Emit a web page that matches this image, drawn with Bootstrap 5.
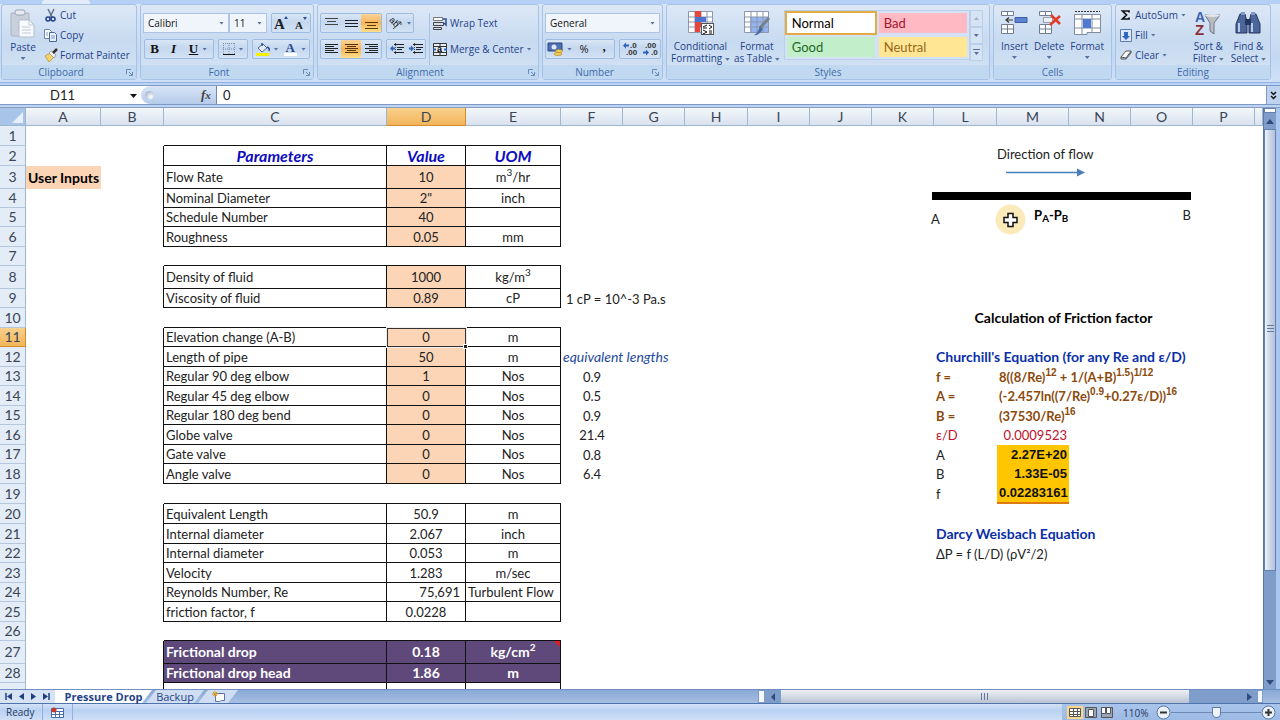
<!DOCTYPE html>
<html lang="en">
<head>
<meta charset="utf-8">
<meta name="viewport" content="width=device-width, initial-scale=1">
<title>Pressure Drop</title>
<link href="https://cdn.jsdelivr.net/npm/bootstrap@5.3.0/dist/css/bootstrap.min.css" rel="stylesheet">
<style>
:root{--ui:#1f4288;--ink:#222}
body{height:100vh;min-height:400px;overflow:hidden;background:#bcd3f3;font-family:"Open Sans","Noto Sans",sans-serif;font-size:10px;line-height:12px;color:var(--ui)}
button,select,input{font:inherit;color:inherit}
button{border:0;background:none;padding:0}
svg{display:block;flex:none;overflow:visible}
/* ribbon */
.tabstrip{height:4px;background:#b4d0f7}
.tabstrip div{width:48px;height:4px;margin-left:42px;background:#e3edf9;border-radius:3px 3px 0 0}
.ribbon{height:79px;padding:0 8px 2px 1px;background:linear-gradient(#d9e6f6,#c3d8f1 70%,#cfe0f6);border-bottom:1px solid #8db2e3;gap:3px}
.rgroup{border:1px solid #a6c2e6;border-radius:3px;background:linear-gradient(#dde8f5,#d2e1f4 25%,#c7daf0 50%,#d5e4f5);flex:none}
.rbody{flex:1;min-height:0;padding:5px 4px 0}
.rlabel{height:14px;line-height:14px;background:#c1d8f1;color:#3e6aaa;text-align:center;position:relative}
.rlabel svg{position:absolute;right:3px;top:4px}
.w-clip{width:136px}.w-font{width:174px}.w-align{width:222px}.w-num{width:121px}.w-style{width:324px}.w-cells{width:119px}.w-edit{width:156px}
.big{display:flex;flex-direction:column;align-items:center;line-height:12px;white-space:nowrap}
.lrow{display:flex;align-items:center;gap:3px;height:20px;white-space:nowrap}
.cluster{display:flex;align-items:center;height:20px;border:1px solid #9ebbe2;border-radius:2px;background:linear-gradient(#d9e6f6,#c5d8ef 45%,#d3e2f4)}
.cluster button{height:18px;width:20px;display:flex;align-items:center;justify-content:center;gap:4px}
.cluster .wide{width:30px}
.cluster .on{background:linear-gradient(#fbd39a,#f7b457 50%,#ffe08a)}
.serif{font:700 13px "Liberation Serif",serif;color:#111}
.caret{width:5px;height:3px;display:inline-block;background:#56749f;clip-path:polygon(0 0,100% 0,50% 100%);vertical-align:middle;flex:none}
.pick{position:relative;display:flex;align-items:center}
.pick select{appearance:none;width:100%;height:20px;border:1px solid #abc4e4;border-radius:0;background:#f0f5fc;padding:0 4px;color:#111;outline:0}
.pick .caret{position:absolute;right:5px}
.gallery{border:1px solid #b9cfea;background:#d3e2f4;width:186px;flex:none}
.gallery button{width:88px;height:20px;margin:2px;text-align:left;padding-left:5px;font:13px/20px Lato,sans-serif}
.gallery .sel{outline:2px solid #e3ab44;background:#fff;color:#000}
.gscroll{width:13px}
.gscroll button{flex:1;display:flex;align-items:center;justify-content:center;border:1px solid #b9cfea;background:#d5e3f5}
/* formula bar */
.fbar{height:20px;margin-top:2px;background:#fff;border-top:1px solid #7d99c4;border-bottom:1px solid #7d99c4;color:#222;font:13px/18px Lato,sans-serif}
.fbar input{border:0;outline:0;background:none;padding:0}
.namebox{width:141px;position:relative}
.namebox input{width:125px;text-align:center}
.namebox .caret{background:#111;width:7px;height:4px;position:absolute;right:4px;top:8px}
.fx{width:76px;border-radius:10px 0 0 10px;background:linear-gradient(#d9e5f7,#b5cbea);border-right:1px solid #7188ae;padding:0 5px 0 4px}
.fx .knob{width:9px;height:9px;border-radius:50%;background:radial-gradient(circle at 65% 65%,#fff,#aebcd3 70%)}
.fx i{font:italic 700 13px "Liberation Serif",serif;color:#444}
.expand{width:14px;background:#bdd3f0;border-left:1px solid #7d99c4}
/* sheet */
.work{flex:1;min-height:0;margin-top:2px;border-top:1px solid #8a9fc0}
.sheet{flex:1;min-width:0;overflow:hidden;position:relative;background:#fff}
.grid{table-layout:fixed;width:100%;border-collapse:separate;border-spacing:0;font:13px/18px Lato,sans-serif;color:var(--ink)}
.grid td,.grid th{padding:0 2px;height:20px;white-space:nowrap;vertical-align:middle;font-weight:400}
.grid .s td,.grid .s th{height:19px}
.grid .t td,.grid .t th{height:23px}
.grid thead th{height:18px!important;font-size:14px;line-height:17px;text-align:center;background:linear-gradient(#f4f7fb,#d9e2ee);border-right:1px solid #9eb6ce;border-bottom:1px solid #9eb6ce;padding:0;color:#3a4656}
.grid tbody th{font-size:14px;text-align:center;background:#e4ecf7;border-right:1px solid #9eb6ce;border-bottom:1px solid #b5c7dd;padding:0;color:#3a4656}
.grid thead .hot,.grid tbody .hot{background:linear-gradient(#f9d08d,#f2b55a);border-color:#d18b2c}
.corner{background:#a9c4e9!important;position:relative}
.corner svg{position:absolute;right:2px;bottom:2px}
.grid .be{border-right:1px solid #111}
.grid .bb{border-bottom:1px solid #111}
.grid .k{border-right:1px solid #111;border-bottom:1px solid #111}
.grid .c{text-align:center}
.grid .in{background:#fbd5b5}
.grid .hd td.k{color:#0b0bc0;font-size:16px;font-weight:700;font-style:italic;text-align:center}
.grid .pur td.k{background:#5f497a;color:#fff;font-size:14px;font-weight:700}
.grid .strong{font-size:14px;font-weight:700;color:#000}
.grid .eq{font-size:14px;font-style:italic;color:#1f4a9c}
.grid .rd{color:#c0102c}
.note{position:relative}
.note::after{content:"";position:absolute;right:0;top:0;border:3px solid;border-color:#e01b24 #e01b24 transparent transparent}
.active{position:relative}
.active::after{content:"";position:absolute;inset:0 -1px -1px 0;border:1px solid #333;outline:1px solid #eee;pointer-events:none}
.active i{position:absolute;right:-3px;bottom:-3px;width:5px;height:5px;background:#222;border:1px solid #fff;z-index:2}
.grid sup{font-size:10px;line-height:0;top:-6px;vertical-align:baseline}
.grid .bl{color:#0a2fa8;font-size:14px;font-weight:700}
.grid .br{color:#8b4a0b;font-weight:700}
.grid .br sup{font:700 10px/0 "Liberation Sans",sans-serif}
.grid .y{background:#ffc600;color:#111;font:700 13px/18px "Liberation Sans",sans-serif;text-align:right}
.grid .yl{border-bottom:2px solid #dd7a10}
/* drawing shapes floating over the sheet */
.fig{position:absolute;left:931px;top:37px;width:260px;color:var(--ink);font:13px/18px Lato,sans-serif}
.fig .pipe{height:8px;background:#000;margin:15px 0 8px 1px}
.fig .title{padding-left:66px}
.fig .arrow{margin:5px 0 0 75px}
.fig b{padding-right:20px;color:#000}
.pointer{position:absolute;left:995px;top:96px}
/* scroll bars */
.vbar{width:13px;background:#7f9dcb;border-left:1px solid #5b79aa}
.vbar .thumb{flex:1;padding-bottom:42px;border:1px solid #6681ad;background:linear-gradient(90deg,#eef3fa,#cdd8e8 45%,#b4c4dc)}
.vbar button,.hbar button{display:flex;align-items:center;justify-content:center}
.hbar{background:#7f9dcb;width:505px;margin-right:17px}
.hbar .thumb{flex:1;background:linear-gradient(#eef1f6,#b9c3d4)}
.tabs{height:15px;background:linear-gradient(#89a9d6,#a6bfe3);border-top:1px solid #6f8fbf;border-bottom:1px solid #4f73ab;line-height:13px;font-size:11px}
.nav4{width:56px;background:#d6e3f5;border-right:1px solid #8aa6d0;padding:0 5px}
.stab{height:13px;position:relative;z-index:0;display:flex;align-items:center;justify-content:center;width:58px;margin-right:-6px}
.stab::before{content:"";position:absolute;inset:0;z-index:-1;background:#cfdef2;clip-path:polygon(10px 0,100% 0,calc(100% - 10px) 100%,0 100%)}
.stab.cur{width:97px;font-weight:700;margin-left:-1px}
.stab.cur::before{background:#fff;clip-path:polygon(0 0,100% 0,calc(100% - 10px) 100%,0 100%)}
.stab.new{width:40px}
.status{height:16px;background:linear-gradient(#d3e3f8,#b9d1f2 40%,#cfe0f7);font-size:10px;color:#26395e}
.status .sep{border-right:1px solid #94b0da;height:16px;line-height:17px}
.zoom{background:linear-gradient(#a9c5ec,#9dbae5);padding:1px 4px 0 5px;width:218px}
.zoom input{appearance:none;width:90px;height:14px;background:linear-gradient(#6e88b4,#6e88b4) center/100% 1px no-repeat;margin:0}
.zoom input::-webkit-slider-thumb{appearance:none;width:9px;height:11px;background:#eef3fb;border:1px solid #5e78a4;border-radius:1px 1px 5px 5px}
</style>
</head>
<body class="d-flex flex-column">
<header>
<div class="tabstrip"><div></div></div>
<div class="ribbon d-flex">
  <section class="rgroup w-clip d-flex flex-column">
    <div class="rbody d-flex gap-2 pt-0">
      <button class="big pt-1 ps-1"><svg width="26" height="32" viewBox="0 0 26 32"><rect x="1" y="4" width="18" height="23" rx="1" fill="#c9d0db" stroke="#aab3c2"/><rect x="5" y="1" width="10" height="5" rx="2" fill="#e8ebf0" stroke="#9aa5b6"/><path d="M9 11h10l5 5v12H9z" fill="#f8fafd" stroke="#b3bdcc"/><path d="M19 11v5h5M12 18h8M12 21h9M12 24h9" fill="none" stroke="#c3cbd8"/></svg><span>Paste</span><span class="caret mt-1"></span></button>
      <div>
        <button class="lrow"><svg width="13" height="13" viewBox="0 0 13 13"><path d="M4 0l4 8M10 0L6 8" stroke="#5f6f88" stroke-width="1.5"/><circle cx="4" cy="10" r="2" fill="none" stroke="#1e3f8c" stroke-width="1.5"/><circle cx="9" cy="10" r="2" fill="none" stroke="#1e3f8c" stroke-width="1.5"/></svg>Cut</button>
        <button class="lrow"><svg width="13" height="13" viewBox="0 0 13 13"><path d="M.5.5h5l2 2v7h-7z" fill="#fff" stroke="#6b86b4"/><path d="M5.500 3.500h5l2 2v7h-7z" fill="#e9f0fb" stroke="#47679f"/><path d="M7 7h4M7 9h4M2 4h2M2 6h2" stroke="#7c98c9"/></svg>Copy</button>
        <button class="lrow"><svg width="13" height="13" viewBox="0 0 13 13"><path d="M1 7l5-3 4 4-5 5z" fill="#f6d366" stroke="#bb8d25" stroke-width=".7"/><path d="M5 4l2-2 5 4-2 3z" fill="#eef0f5" stroke="#777" stroke-width=".6"/><path d="M9 4l4-4" stroke="#333" stroke-width="2.500"/></svg>Format Painter</button>
      </div>
    </div>
    <div class="rlabel pe-3">Clipboard<svg width="7" height="7" viewBox="0 0 7 7"><path d="M.5 5V.5H5M3 3l3 3M6.500 3v3.500H3" fill="none" stroke="#6c8ab8"/></svg></div>
  </section>
  <section class="rgroup w-font d-flex flex-column">
    <div class="rbody pt-2 px-0 d-flex flex-column align-items-center" style="gap:6px">
      <div class="d-flex"><label class="pick" style="width:86px"><select aria-label="Font"><option>Calibri</option></select><span class="caret"></span></label><label class="pick" style="width:38px"><select aria-label="Font size"><option>11</option></select><span class="caret"></span></label>
        <div class="cluster ms-1"><button style="width:19px" aria-label="Grow font"><svg width="15" height="14" viewBox="0 0 15 14"><text x="0" y="13" font-family="Liberation Serif" font-size="15" font-weight="700" fill="#222">A</text><path d="M10 3l2-3 2 3z" fill="#2c4f96"/></svg></button><button style="width:19px" aria-label="Shrink font"><svg width="14" height="14" viewBox="0 0 14 14"><text x="1" y="13" font-family="Liberation Serif" font-size="11" font-weight="700" fill="#222">A</text><path d="M9 1h4l-2 3z" fill="#2c4f96"/></svg></button></div></div>
      <div class="d-flex gap-1">
        <div class="cluster"><button class="serif" style="width:19px">B</button><button class="serif fst-italic" style="width:19px">I</button><button class="wide serif"><u>U</u><span class="caret"></span></button></div>
        <div class="cluster"><button style="width:28px" aria-label="Borders"><svg width="12" height="12" viewBox="0 0 12 12"><path d="M.5 0v11M6 0v11M11.500 0v11M0 .5h12M0 6h12" stroke="#7f8fab" stroke-dasharray="1 1"/><path d="M0 11.500h12" stroke="#111"/></svg><span class="caret"></span></button></div>
        <div class="cluster"><button style="width:28px" aria-label="Fill colour"><svg width="14" height="14" viewBox="0 0 14 14"><path d="M2 6l5-4 4 4-5 4z" fill="#e3ebf8" stroke="#4c6594"/><path d="M6 4V1M11 5q3 1 2 4" fill="none" stroke="#2c4f96" stroke-width="1.500"/><path d="M0 11h13v3H0z" fill="#f3f000"/></svg><span class="caret"></span></button><button style="width:28px" aria-label="Font colour"><svg width="13" height="14" viewBox="0 0 13 14"><text x="1.500" y="10" font-family="Liberation Serif" font-size="13" font-weight="700" fill="#29478a">A</text><path d="M0 11h13v3H0z" fill="#fff"/></svg><span class="caret"></span></button></div>
      </div>
    </div>
    <div class="rlabel pe-3">Font<svg width="7" height="7" viewBox="0 0 7 7"><path d="M.5 5V.5H5M3 3l3 3M6.500 3v3.500H3" fill="none" stroke="#6c8ab8"/></svg></div>
  </section>
  <section class="rgroup w-align d-flex flex-column">
    <div class="rbody d-flex pt-2" style="padding-left:2px">
      <div class="d-flex flex-column" style="gap:6px">
        <div class="d-flex gap-1"><div class="cluster"><button aria-label="Top"><svg width="13" height="12" viewBox="0 0 13 12"><path d="M0 1.500h13M2 4.500h9M0 7.500h13" stroke="#444"/></svg></button><button aria-label="Middle"><svg width="13" height="12" viewBox="0 0 13 12"><path d="M0 3.500h13M0 6.500h13M0 9.500h13" stroke="#222"/></svg></button><button class="on" aria-label="Bottom"><svg width="13" height="12" viewBox="0 0 13 12"><path d="M0 5.500h13M2 8.500h9M0 11.500h13" stroke="#553a10"/></svg></button></div>
        <div class="cluster"><button style="width:26px" aria-label="Orientation"><svg width="14" height="14" viewBox="0 0 14 14"><text transform="rotate(45 4 6)" x="0" y="8" font-family="Liberation Sans" font-size="9" fill="#222">ab</text><path d="M4 13l8-7M12 9V6H9" fill="none" stroke="#444"/></svg><span class="caret"></span></button></div></div>
        <div class="d-flex gap-1"><div class="cluster"><button aria-label="Left"><svg width="13" height="12" viewBox="0 0 13 12"><path d="M0 1.500h13M0 3.500h9M0 5.500h13M0 7.500h9M0 9.500h13" stroke="#222"/></svg></button><button class="on" aria-label="Centre"><svg width="13" height="12" viewBox="0 0 13 12"><path d="M0 1.500h13M2 3.500h9M0 5.500h13M2 7.500h9M0 9.500h13" stroke="#53330b"/></svg></button><button aria-label="Right"><svg width="13" height="12" viewBox="0 0 13 12"><path d="M0 1.500h13M4 3.500h9M0 5.500h13M4 7.500h9M0 9.500h13" stroke="#222"/></svg></button></div>
        <div class="cluster"><button style="width:19px" aria-label="Decrease indent"><svg width="14" height="12" viewBox="0 0 14 12"><path d="M4 1.500h10M7 4.500h7M7 6.500h5M4 9.500h10" stroke="#222"/><path d="M5.500 0v12" stroke="#444" stroke-dasharray="1 1"/><path d="M0 5.500l3-3v2h2v2H3v2z" fill="#2d62b8"/></svg></button><button style="width:19px" aria-label="Increase indent"><svg width="14" height="12" viewBox="0 0 14 12"><path d="M4 1.500h10M7 4.500h7M7 6.500h5M4 9.500h10" stroke="#222"/><path d="M5.500 0v12" stroke="#444" stroke-dasharray="1 1"/><path d="M5 5.500l-3-3v2H0v2h2v2z" fill="#2d62b8"/></svg></button></div></div>
      </div>
      <div class="border-start d-flex flex-column" style="gap:6px;border-color:#a9c2e2!important;margin-left:3px;padding-left:3px">
        <button class="lrow"><svg width="14" height="14" viewBox="0 0 14 14"><path d="M.5 1.500h9v3h-9z" fill="#fff" stroke="#777"/><path d="M.5 6.500h10v3H.5zM.5 11.500h8v2h-8z" fill="#d8dde7" stroke="#444"/><path d="M10 3h3v6l-2-2" fill="none" stroke="#2d4f94" stroke-width="1.500"/></svg>Wrap Text</button>
        <button class="lrow"><svg width="14" height="13" viewBox="0 0 14 13"><path d="M.5.5h13v12H.5zM7 0v3M7 10v3M0 3.500h14M0 9.500h14" fill="#e8edf6" stroke="#333"/><text x="4" y="9" font-family="Liberation Sans" font-weight="700" font-size="9" fill="#000">a</text><path d="M0 6.500h3M11 6.500h3" stroke="#2d62b8" stroke-width="2"/></svg>Merge &amp; Center <span class="caret"></span></button>
      </div>
    </div>
    <div class="rlabel pe-3">Alignment<svg width="7" height="7" viewBox="0 0 7 7"><path d="M.5 5V.5H5M3 3l3 3M6.500 3v3.500H3" fill="none" stroke="#6c8ab8"/></svg></div>
  </section>
  <section class="rgroup w-num d-flex flex-column">
    <div class="rbody d-flex flex-column pt-2" style="padding-left:2px;padding-right:2px;gap:6px">
      <label class="pick"><select aria-label="Number format"><option>General</option></select><span class="caret"></span></label>
      <div class="d-flex gap-1"><div class="cluster"><button style="width:28px" aria-label="Currency"><svg width="15" height="14" viewBox="0 0 15 14"><path d="M0 1h14v8H0z" fill="#4d6fb3" stroke="#2c4580"/><circle cx="6" cy="5" r="2.500" fill="#dfe7f6"/><ellipse cx="11" cy="9" rx="3.500" ry="1.500" fill="#f4cf58" stroke="#a9801b" stroke-width=".6"/><ellipse cx="10" cy="12" rx="4" ry="1.500" fill="#f4cf58" stroke="#a9801b" stroke-width=".6"/></svg><span class="caret"></span></button><button style="font-size:11px;color:#222">%</button><button class="serif pb-1">,</button></div>
      <div class="cluster"><button aria-label="Increase decimal"><svg width="15" height="14" viewBox="0 0 15 14" font-family="Liberation Sans" font-size="8" font-weight="700" fill="#333"><text x="7" y="6">.0</text><text x="3" y="13">.00</text><path d="M0 3.500l3-3v2h3v2H3v2z" fill="#2d62b8"/></svg></button><button aria-label="Decrease decimal"><svg width="15" height="14" viewBox="0 0 15 14" font-family="Liberation Sans" font-size="8" font-weight="700" fill="#333"><text x="2" y="6">.00</text><text x="8" y="13">.0</text><path d="M6 10.500l-3-3v2H0v2h3v2z" fill="#2d62b8"/></svg></button></div></div>
    </div>
    <div class="rlabel pe-3">Number<svg width="7" height="7" viewBox="0 0 7 7"><path d="M.5 5V.5H5M3 3l3 3M6.500 3v3.500H3" fill="none" stroke="#6c8ab8"/></svg></div>
  </section>
  <section class="rgroup w-style d-flex flex-column">
    <div class="rbody d-flex align-items-start gap-1">
      <button class="big"><svg width="27" height="27" viewBox="0 0 27 27"><path d="M1.500 1.500h24v21h-24zM1.500 7h24M1.500 12h24M1.500 17h24M8 1v21M14 1v21M20 1v21" fill="#fff" stroke="#8a97ad"/><path d="M8 1h6v6H8zM8 12h6v5H8z" fill="#e8443a"/><path d="M8 7h11v5H8z" fill="#4a74cf"/><path d="M8 17h5v5H8z" fill="#e8443a"/><rect x="14.500" y="13.500" width="12" height="11" fill="#fff" stroke="#555"/><path d="M16 17l4-2M16 18h4M22 15l3 2-3 2M16 20l4 2-4 2M22 21h3M22 23h3" fill="none" stroke="#111"/></svg><span style="margin-top:3px">Conditional<br>Formatting <i class="caret"></i></span></button>
      <button class="big"><svg width="27" height="27" viewBox="0 0 27 27"><path d="M1.500 1.500h24v21h-24z" fill="#fff"/><path d="M7 7h19v15H7z" fill="#94b4ee"/><path d="M1.500 1.500h24v21h-24zM1.500 7h24M1.500 12h24M1.500 17h24M8 1v21M14 1v21M20 1v21" fill="none" stroke="#8a97ad"/><path d="M26 8l-9 10" stroke="#7b8189" stroke-width="3"/><path d="M17 16l3 3q-4 7-9 6 4-2 6-9z" fill="#4b6ba5"/></svg><span style="margin-top:3px">Format<br>as Table <i class="caret"></i></span></button>
      <div class="gallery d-flex flex-wrap"><button class="sel">Normal</button><button style="background:#ffb9c3;color:#a5142c">Bad</button><button style="background:#c2efca;color:#1b6a22">Good</button><button style="background:#ffe694;color:#97691a">Neutral</button></div>
      <div class="gscroll d-flex flex-column align-self-stretch ms-n1 pb-1" style="margin-left:-4px"><button aria-label="Up"><svg width="5" height="3"><path d="M0 3h5L2.500 0z" fill="#a3adbd"/></svg></button><button aria-label="Down"><span class="caret"></span></button><button aria-label="More"><svg width="7" height="7"><path d="M0 .5h7" stroke="#56749f"/><path d="M1 3h5L3.500 6z" fill="#56749f"/></svg></button></div>
    </div>
    <div class="rlabel">Styles</div>
  </section>
  <section class="rgroup w-cells d-flex flex-column">
    <div class="rbody d-flex justify-content-between align-items-start" style="padding-left:7px;padding-right:7px">
      <button class="big"><svg width="27" height="27" viewBox="0 0 27 27"><path d="M.5 1.500h12v4H.5zM6.500 1v5M.5 14.500h12v9H.5zM6.500 14v9M.5 19h12" fill="#fff" stroke="#6f7c92"/><path d="M14 7.500h12v5H14z" fill="#5b83d2" stroke="#3c5ea6"/><path d="M12 10H6M8 7.500L5 10l3 2.500" fill="none" stroke="#333" stroke-width="1.200"/></svg><span style="margin-top:3px">Insert</span><span class="caret mt-1"></span></button>
      <button class="big"><svg width="27" height="27" viewBox="0 0 27 27"><path d="M3.500 1.500h12v4h-12zM9.500 1v5M3.500 14.500h12v9h-12zM9.500 14v9M3.500 19h12" fill="#fff" stroke="#6f7c92"/><path d="M7.500 7.500h9v5h-9z" fill="#eaf0fa" stroke="#555" stroke-dasharray="1 1"/><path d="M15 5l9 9M24 6l-10 9" stroke="#e23a2b" stroke-width="2.500"/></svg><span style="margin-top:3px">Delete</span><span class="caret mt-1"></span></button>
      <button class="big"><svg width="27" height="27" viewBox="0 0 27 27"><path d="M.5 4.500h26v18H13v2H.5zM8 4v20M18 4v18M.5 9h26M.5 18h26" fill="#fff" stroke="#808ca1"/><path d="M9 9h8v9H9z" fill="#4f79cf"/><path d="M1 1.500h25" stroke="#333" stroke-dasharray="2 1"/></svg><span style="margin-top:3px">Format</span><span class="caret mt-1"></span></button>
    </div>
    <div class="rlabel">Cells</div>
  </section>
  <section class="rgroup w-edit d-flex flex-column">
    <div class="rbody d-flex justify-content-between align-items-start pt-0">
      <div>
        <button class="lrow"><svg width="12" height="12" viewBox="0 0 12 12"><path d="M9 3.500V2H2.500l4 4-4 4H9V8.500" fill="none" stroke="#111" stroke-width="1.700"/></svg>AutoSum <span class="caret"></span></button>
        <button class="lrow"><svg width="12" height="13" viewBox="0 0 12 13"><path d="M.5.5h11v12H.5z" fill="#dbe7f8" stroke="#5d7db5"/><path d="M4 3h4v4h2l-4 4-4-4h2z" fill="#2f66c4"/></svg>Fill <span class="caret"></span></button>
        <button class="lrow"><svg width="12" height="12" viewBox="0 0 12 12"><path d="M1 8l5-6h5L6 9z" fill="#fff" stroke="#555"/><path d="M1 8v2h5l5-6V2" fill="none" stroke="#555"/></svg>Clear <span class="caret"></span></button>
      </div>
      <button class="big" style="padding-top:5px"><svg width="28" height="27" viewBox="0 0 28 27"><text x="1" y="12" font-family="Liberation Sans" font-weight="700" font-size="14" fill="#3d62b3">A</text><text x="1" y="25" font-family="Liberation Sans" font-weight="700" font-size="15" fill="#8d2e35">Z</text><path d="M11 5h15l-6 8v11l-4-3v-8z" fill="#b9bdc6" stroke="#6f747f"/><ellipse cx="18.500" cy="5.500" rx="7.500" ry="1.500" fill="#e3e6ec"/></svg><span style="margin-top:3px">Sort &amp;<br>Filter <i class="caret"></i></span></button>
      <button class="big" style="padding-top:5px"><svg width="28" height="27" viewBox="0 0 28 27"><path d="M6 4h5l2 8v11H2V14zM17 4h5l4 10v9H15V12z" fill="#4c6699" stroke="#22365f"/><path d="M11 9h6v6h-6z" fill="#22365f"/><path d="M7 2h4v3H7zM17 2h4v3h-4z" fill="#7f99c9"/><path d="M5 13v9M18 13v9" stroke="#b7c8e8" stroke-width="2"/></svg><span style="margin-top:3px">Find &amp;<br>Select <i class="caret"></i></span></button>
    </div>
    <div class="rlabel">Editing</div>
  </section>
</div>
<div class="fbar d-flex">
  <div class="namebox"><input aria-label="Name box" value="D11"><span class="caret"></span></div>
  <div class="fx d-flex align-items-center justify-content-between"><span class="knob"></span><i>f<small>x</small></i></div>
  <input class="flex-grow-1" aria-label="Formula" value="0" style="padding-left:6px">
  <button class="expand d-flex align-items-center justify-content-center" aria-label="Expand"><svg width="7" height="9" viewBox="0 0 7 9"><path d="M1 1l2.500 2.500L6 1M1 5l2.500 2.500L6 5" fill="none" stroke="#111" stroke-width="1.500"/></svg></button>
</div>
</header>
<main class="work d-flex">
<div class="sheet">
<table class="grid">
<colgroup><col style="width:26px"><col style="width:75px"><col style="width:63px"><col style="width:223px"><col style="width:79px"><col style="width:95px"><col style="width:62px"><col style="width:62px"><col style="width:63px"><col style="width:62px"><col style="width:62px"><col style="width:62px"><col style="width:63px"><col style="width:72px"><col style="width:62px"><col style="width:62px"><col style="width:62px"><col></colgroup>
<thead><tr><th class="corner"><svg width="11" height="11"><path d="M11 0v11H0z" fill="#e6effb"/></svg></th><th>A</th><th>B</th><th>C</th><th class="hot">D</th><th>E</th><th>F</th><th>G</th><th>H</th><th>I</th><th>J</th><th>K</th><th>L</th><th>M</th><th>N</th><th>O</th><th>P</th><th></th></tr></thead>
<tbody>
<tr><th>1</th><td></td><td></td><td class="bb"></td><td class="bb"></td><td class="bb"></td><td colspan="12"></td></tr>
<tr class="hd"><th>2</th><td></td><td class="be"></td><td class="k">Parameters</td><td class="k">Value</td><td class="k">UOM</td><td colspan="12"></td></tr>
<tr class="t"><th>3</th><td class="in strong">User Inputs</td><td class="be"></td><td class="k">Flow Rate</td><td class="k c in">10</td><td class="k c">m<sup>3</sup>/hr</td><td colspan="12"></td></tr>
<tr class="s"><th>4</th><td></td><td class="be"></td><td class="k">Nominal Diameter</td><td class="k c in">2"</td><td class="k c">inch</td><td colspan="12"></td></tr>
<tr class="s"><th>5</th><td></td><td class="be"></td><td class="k">Schedule Number</td><td class="k c in">40</td><td class="k c"></td><td colspan="12"></td></tr>
<tr><th>6</th><td></td><td class="be"></td><td class="k">Roughness</td><td class="k c in">0.05</td><td class="k c">mm</td><td colspan="12"></td></tr>
<tr class="s"><th>7</th><td></td><td></td><td class="bb"></td><td class="bb"></td><td class="bb"></td><td colspan="12"></td></tr>
<tr class="t"><th>8</th><td></td><td class="be"></td><td class="k">Density of fluid</td><td class="k c in">1000</td><td class="k c">kg/m<sup>3</sup></td><td colspan="12"></td></tr>
<tr class="s"><th>9</th><td></td><td class="be"></td><td class="k">Viscosity of fluid</td><td class="k c in">0.89</td><td class="k c">cP</td><td colspan="12" style="padding-left:5px">1 cP = 10^-3 Pa.s</td></tr>
<tr><th>10</th><td></td><td></td><td class="bb"></td><td class="bb"></td><td class="bb"></td><td colspan="6"></td><td colspan="4" class="c strong">Calculation of Friction factor</td><td colspan="2"></td></tr>
<tr class="s"><th class="hot">11</th><td></td><td class="be"></td><td class="k">Elevation change (A-B)</td><td class="k c in active">0<i></i></td><td class="k c">m</td><td colspan="12"></td></tr>
<tr><th>12</th><td></td><td class="be"></td><td class="k">Length of pipe</td><td class="k c in">50</td><td class="k c">m</td><td colspan="6" class="eq">equivalent lengths</td><td colspan="6" class="bl">Churchill's Equation (for any Re and ε/D)</td></tr>
<tr class="s"><th>13</th><td></td><td class="be"></td><td class="k">Regular 90 deg elbow</td><td class="k c in">1</td><td class="k c">Nos</td><td class="c">0.9</td><td colspan="5"></td><td class="br">f =</td><td colspan="5" class="br">8((8/Re)<sup>12</sup> + 1/(A+B)<sup>1.5</sup>)<sup>1/12</sup></td></tr>
<tr><th>14</th><td></td><td class="be"></td><td class="k">Regular 45 deg elbow</td><td class="k c in">0</td><td class="k c">Nos</td><td class="c">0.5</td><td colspan="5"></td><td class="br">A =</td><td colspan="5" class="br">(-2.457ln((7/Re)<sup>0.9</sup>+0.27ε/D))<sup>16</sup></td></tr>
<tr class="s"><th>15</th><td></td><td class="be"></td><td class="k">Regular 180 deg bend</td><td class="k c in">0</td><td class="k c">Nos</td><td class="c">0.9</td><td colspan="5"></td><td class="br">B =</td><td colspan="5" class="br">(37530/Re)<sup>16</sup></td></tr>
<tr><th>16</th><td></td><td class="be"></td><td class="k">Globe valve</td><td class="k c in">0</td><td class="k c">Nos</td><td class="c">21.4</td><td colspan="5"></td><td class="rd">ε/D</td><td class="text-end rd">0.0009523</td><td colspan="4"></td></tr>
<tr class="s"><th>17</th><td></td><td class="be"></td><td class="k">Gate valve</td><td class="k c in">0</td><td class="k c">Nos</td><td class="c">0.8</td><td colspan="5"></td><td>A</td><td class="y">2.27E+20</td><td colspan="4"></td></tr>
<tr><th>18</th><td></td><td class="be"></td><td class="k">Angle valve</td><td class="k c in">0</td><td class="k c">Nos</td><td class="c">6.4</td><td colspan="5"></td><td>B</td><td class="y">1.33E-05</td><td colspan="4"></td></tr>
<tr><th>19</th><td></td><td></td><td class="bb"></td><td class="bb"></td><td class="bb"></td><td colspan="6"></td><td>f</td><td class="y yl">0.02283161</td><td colspan="4"></td></tr>
<tr><th>20</th><td></td><td class="be"></td><td class="k">Equivalent Length</td><td class="k c">50.9</td><td class="k c">m</td><td colspan="12"></td></tr>
<tr><th>21</th><td></td><td class="be"></td><td class="k">Internal diameter</td><td class="k c">2.067</td><td class="k c">inch</td><td colspan="6"></td><td colspan="6" class="bl">Darcy Weisbach Equation</td></tr>
<tr class="s"><th>22</th><td></td><td class="be"></td><td class="k">Internal diameter</td><td class="k c">0.053</td><td class="k c">m</td><td colspan="6"></td><td colspan="6">ΔP = f (L/D) (ρV²/2)</td></tr>
<tr><th>23</th><td></td><td class="be"></td><td class="k">Velocity</td><td class="k c">1.283</td><td class="k c">m/sec</td><td colspan="12"></td></tr>
<tr class="s"><th>24</th><td></td><td class="be"></td><td class="k">Reynolds Number, Re</td><td class="k text-end" style="padding-right:5px">75,691</td><td class="k">Turbulent Flow</td><td colspan="12"></td></tr>
<tr><th>25</th><td></td><td class="be"></td><td class="k">friction factor, f</td><td class="k c">0.0228</td><td class="k"></td><td colspan="12"></td></tr>
<tr class="s"><th>26</th><td></td><td></td><td class="bb"></td><td class="bb"></td><td class="bb"></td><td colspan="12"></td></tr>
<tr class="t pur"><th>27</th><td></td><td class="be"></td><td class="k">Frictional drop</td><td class="k c">0.18</td><td class="k c note">kg/cm<sup>2</sup></td><td colspan="12"></td></tr>
<tr class="s pur"><th>28</th><td></td><td class="be"></td><td class="k">Frictional drop head</td><td class="k c">1.86</td><td class="k c">m</td><td colspan="12"></td></tr>
<tr><th></th><td></td><td class="be"></td><td class="k"></td><td class="k c"></td><td class="k c"></td><td colspan="12"></td></tr>
</tbody>
</table>
<div class="fig">
  <div class="title">Direction of flow</div>
  <svg class="arrow" width="79" height="9" viewBox="0 0 79 9"><path d="M0 4.500h72" stroke="#4a7ebb" stroke-width="1.500"/><path d="M71 .5l8 4-8 4z" fill="#4a7ebb"/></svg>
  <div class="pipe"></div>
  <div class="d-flex justify-content-between" style="line-height:14px"><span class="pt-1">A</span><b>P<sub>A</sub>-P<sub>B</sub></b><span>B</span></div>
</div>
<svg class="pointer" width="31" height="31" viewBox="0 0 31 31"><circle cx="15.500" cy="15.500" r="15" fill="#fbe9b4" opacity=".9"/><path d="M13 9.500h5v4h4v5h-4v4h-5v-4H9v-5h4z" fill="#fff" stroke="#111" stroke-width="1.500"/></svg>
</div>
<div class="vbar d-flex flex-column">
  <div style="height:5px;background:#fff;border:1px solid #6681ad"></div>
  <button style="height:16px" aria-label="Scroll up"><svg width="8" height="5"><path d="M0 5h8L4 0z" fill="#2f4a7c"/></svg></button>
  <div class="thumb d-flex align-items-center justify-content-center"><svg width="7" height="8"><path d="M0 .5h7M0 3.500h7M0 6.500h7" stroke="#66799b"/></svg></div>
  <div style="height:104px"></div>
  <button style="height:14px" aria-label="Scroll down"><svg width="8" height="5"><path d="M0 0h8L4 5z" fill="#2f4a7c"/></svg></button>
</div>
<div style="width:4px;background:#a9c6f0"></div>
</main>
<footer>
<div class="tabs d-flex justify-content-between">
  <div class="d-flex">
    <div class="nav4 d-flex justify-content-between align-items-center"><button aria-label="First"><svg width="7" height="7"><path d="M1 0v7" stroke="#1f3f80" stroke-width="1.500"/><path d="M7 0v7L2 3.500z" fill="#1f3f80"/></svg></button><button aria-label="Previous"><svg width="5" height="7"><path d="M5 0v7L0 3.500z" fill="#1f3f80"/></svg></button><button aria-label="Next"><svg width="5" height="7"><path d="M0 0v7l5-3.500z" fill="#1f3f80"/></svg></button><button aria-label="Last"><svg width="7" height="7"><path d="M6 0v7" stroke="#1f3f80" stroke-width="1.500"/><path d="M0 0v7l5-3.500z" fill="#1f3f80"/></svg></button></div>
    <button class="stab cur">Pressure Drop</button><button class="stab">Backup</button><button class="stab new" aria-label="New sheet"><svg width="13" height="11" viewBox="0 0 13 11"><path d="M3.500 2.500h9v7h-3l-2 1h-4z" fill="#fff" stroke="#5b75a5"/><path d="M3 0v6M0 3h6M1 1l4 4M5 1L1 5" stroke="#d99a1c"/></svg></button>
  </div>
  <div class="hbar d-flex"><div style="width:7px;background:#f4f8fd;border:1px solid #7d99c4"></div><button style="width:16px" aria-label="Scroll left"><svg width="4" height="8"><path d="M4 0v8L0 4z" fill="#2f4a7c"/></svg></button><div class="thumb d-flex align-items-center justify-content-center"><svg width="8" height="7"><path d="M.5 0v7M3.500 0v7M6.500 0v7" stroke="#66799b"/></svg></div><div style="width:52px"></div><button style="width:16px" aria-label="Scroll right"><svg width="5" height="8"><path d="M0 0v8l5-4z" fill="#2f4a7c"/></svg></button><div style="width:6px;background:#f4f8fd;border:1px solid #7d99c4"></div></div>
</div>
<div class="status d-flex justify-content-between align-items-center">
  <div class="d-flex align-items-center"><span class="sep" style="padding:0 8px 0 6px">Ready</span><button class="sep px-2 d-flex align-items-center" aria-label="Record macro"><svg width="13" height="11" viewBox="0 0 13 11"><path d="M.5 1.500h12v9H.5zM0 4.500h13M0 7.500h13M4.500 4v7M8.500 4v7" fill="#fff" stroke="#476aa8"/><circle cx="3" cy="3" r="2.500" fill="#c23a2c"/></svg></button></div>
  <div class="zoom d-flex align-items-center">
    <button class="d-flex" style="background:#fbd68c" aria-label="Normal view"><svg width="16" height="13" viewBox="0 0 16 13"><path d="M2.500 2.500h11v8h-11zM2 5.500h12M2 8.500h12M6.500 2v9M10.500 2v9" fill="#fff" stroke="#555"/></svg></button><button aria-label="Page layout"><svg width="16" height="13" viewBox="0 0 16 13"><path d="M2.500 1.500h11v10h-11z" fill="#9ba5b6" stroke="#555"/><path d="M5.500 3.500h5v7h-5z" fill="#fff" stroke="#555"/></svg></button><button aria-label="Page break preview"><svg width="16" height="13" viewBox="0 0 16 13"><path d="M2.500 1.500h11v10h-11z" fill="#9ba5b6" stroke="#555"/><path d="M2.500 1.500h4v6h-4zM7.500 1.500h4v6h-4z" fill="#fff" stroke="#555"/></svg></button>
    <span class="ms-2 me-2">110%</span>
    <button aria-label="Zoom out"><svg width="15" height="15" viewBox="0 0 15 15"><circle cx="7.500" cy="7.500" r="6.500" fill="#eaf1fb" stroke="#5e78a4"/><path d="M4 7.500h7" stroke="#333" stroke-width="2"/></svg></button><input type="range" aria-label="Zoom" value="50"><button aria-label="Zoom in"><svg width="15" height="15" viewBox="0 0 15 15"><circle cx="7.500" cy="7.500" r="6.500" fill="#eaf1fb" stroke="#5e78a4"/><path d="M4 7.500h7M7.500 4v7" stroke="#333" stroke-width="2"/></svg></button>
  </div>
</div>
</footer>
<script src="https://cdn.jsdelivr.net/npm/bootstrap@5.3.0/dist/js/bootstrap.bundle.min.js"></script>
</body>
</html>
